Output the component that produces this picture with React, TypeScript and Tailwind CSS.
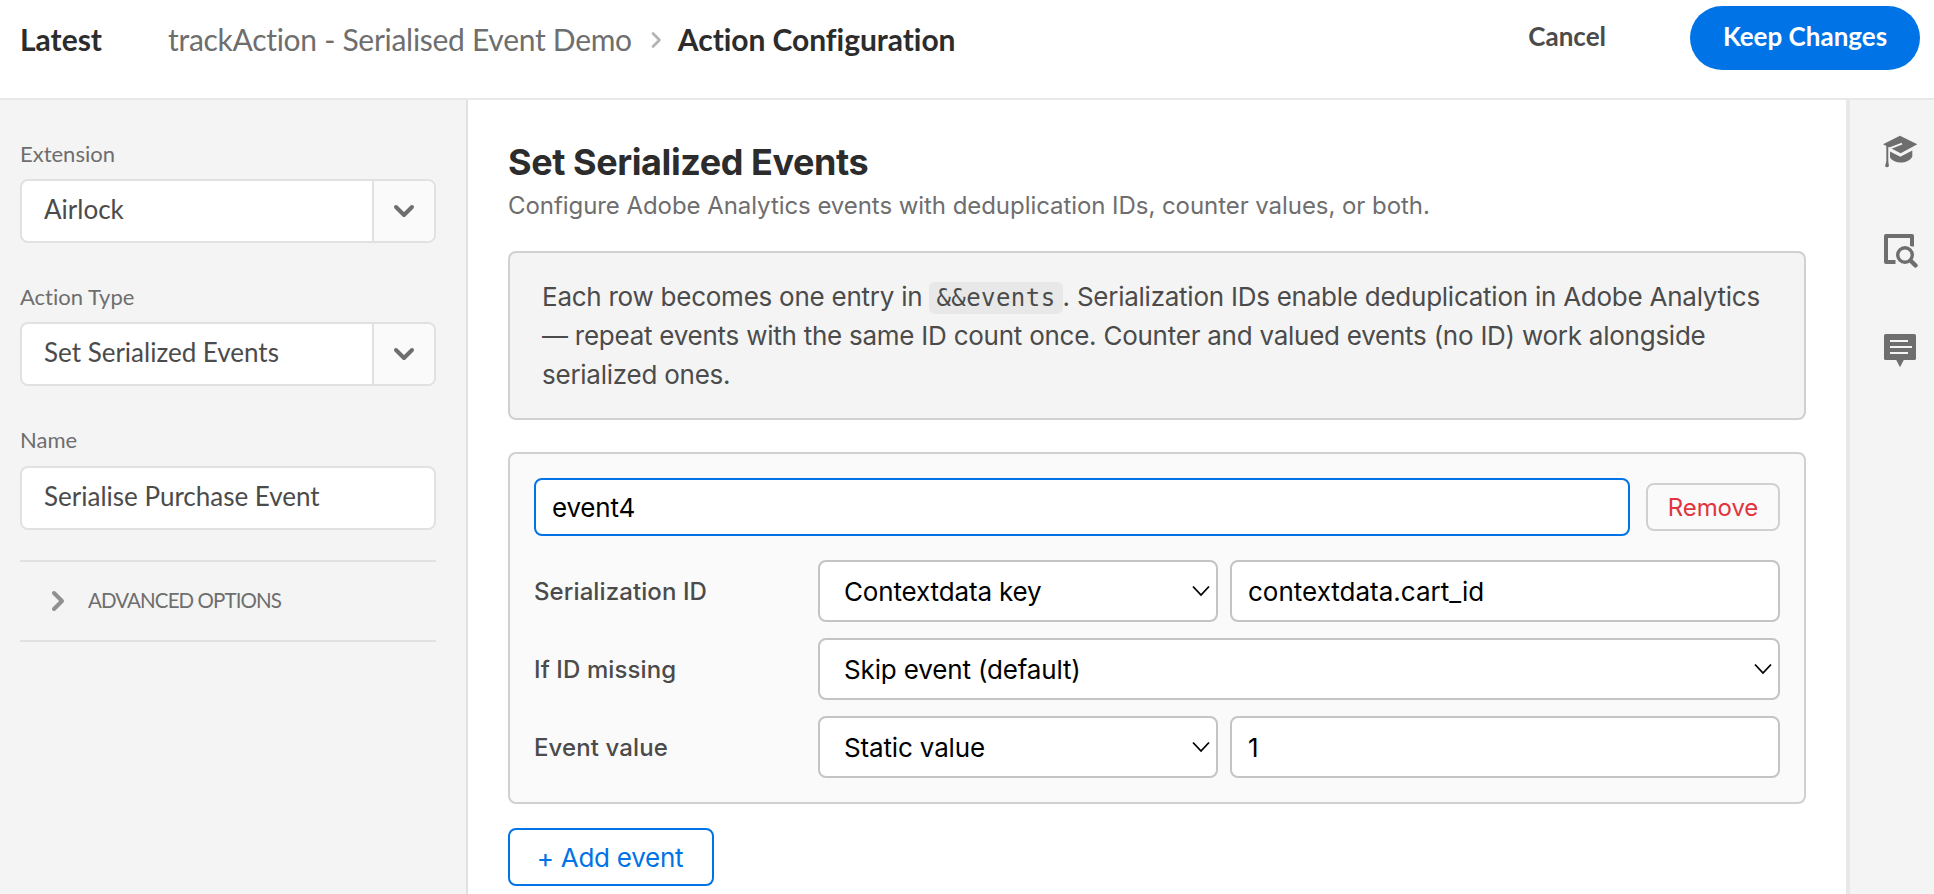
import React from 'react';

const ChevronDown = () => (
  <svg className="h-[14px] w-[22px]" viewBox="0 0 22 14" fill="none" stroke="#6e6e6e" strokeWidth="4" strokeLinecap="round" strokeLinejoin="round">
    <path d="M3 3 L11 11 L19 3" />
  </svg>
);

const SelectArrow = () => (
  <svg className="h-3 w-[18px]" viewBox="0 0 18 12" fill="none" stroke="#000" strokeWidth="1.8">
    <path d="M1 1.5 L9 10 L17 1.5" />
  </svg>
);

const LearnIcon = () => (
  <svg className="h-9 w-9" viewBox="0 0 36 36">
    <path d="M1 11.3 L18 2.7 L35.3 11.3 L18.7 20.2 Z" fill="#6e6e6e" />
    <path d="M20 10.6 L6.5 15.8 L8.5 17.5" fill="none" stroke="#f4f4f4" strokeWidth="1.8" />
    <path d="M8 18.6 L18.3 23.8 L30.3 17.6 V23.4 C26.5 31 12.5 31.5 8 24.4 Z" fill="#6e6e6e" />
    <path d="M5.3 12.5 V32" stroke="#6e6e6e" strokeWidth="2" />
    <path d="M4.4 28.5 H6 L7 33 Q5 35.6 3 33 Z" fill="#6e6e6e" />
  </svg>
);

const InspectIcon = () => (
  <svg className="h-9 w-9" viewBox="0 0 36 36" fill="none" stroke="#6e6e6e">
    <path d="M13.5 29 H4 V3 H30 V13.5" strokeWidth="4" strokeLinejoin="round" />
    <circle cx="23" cy="22" r="10.6" fill="#f4f4f4" stroke="none" />
    <circle cx="23" cy="22" r="7.3" strokeWidth="3.4" />
    <path d="M28.5 27.5 L33.5 32.5" strokeWidth="4.4" strokeLinecap="round" />
  </svg>
);

const CommentIcon = () => (
  <svg className="h-9 w-9" viewBox="0 0 36 36">
    <rect x="2" y="1" width="32" height="26" rx="1.6" fill="#6e6e6e" />
    <path d="M14 26.5 H22 L18 34.2 Z" fill="#6e6e6e" />
    <path d="M8 8 H26 M8 14 H30 M8 20 H26" stroke="#f4f4f4" strokeWidth="2" />
  </svg>
);

const FieldLabel = ({ children }: { children: React.ReactNode }) => (
  <div className="mb-[9px] text-[22px] leading-8 text-[#6e6e6e]">{children}</div>
);

const Picker = ({ label, value }: { label: string; value: string }) => (
  <div>
    <FieldLabel>{label}</FieldLabel>
    <div className="flex h-16 overflow-hidden rounded-lg border-2 border-[#e1e1e1] bg-white">
      <div className="flex flex-1 items-center pb-[3px] pl-[22px] text-[26px] text-[#4b4b4b]">{value}</div>
      <div className="flex w-[62px] items-center justify-center border-l-2 border-[#e1e1e1] bg-[#fafafa]">
        <ChevronDown />
      </div>
    </div>
  </div>
);

const Select = ({ value, className }: { value: string; className: string }) => (
  <div className={`flex h-[62px] items-center justify-between rounded-lg border-2 border-[#c4c4c4] bg-white pl-6 pr-1.5 tracking-[-0.15px] ${className}`}>
    <span className="pt-px">{value}</span>
    <SelectArrow />
  </div>
);

const TextInput = ({ value }: { value: string }) => (
  <div className="flex h-[62px] flex-1 items-center rounded-lg border-2 border-[#c4c4c4] bg-white px-4 pt-px">{value}</div>
);

const EventRow = ({ label, children }: { label: string; children: React.ReactNode }) => (
  <div className="flex items-center text-[26px] text-black">
    <div className="w-[284px] pt-0.5 text-2xl font-medium tracking-[0.1px] text-[#4b4b4b]">{label}</div>
    <div className="flex flex-1 gap-3">{children}</div>
  </div>
);

export default function App() {
  return (
    <div className="flex h-[894px] w-[1934px] flex-col overflow-hidden bg-white font-['Lato',sans-serif] [font-variant-ligatures:none]">
      <header className="flex h-[100px] shrink-0 items-center border-b-2 border-[#e8e8e8] pb-5 pl-5 pr-[14px]">
        <div className="w-[148px] text-[30px] font-bold text-[#2c2c2c]">Latest</div>
        <nav className="flex flex-1 items-center whitespace-nowrap text-[30px]">
          <span className="tracking-[-0.28px] text-[#6e6e6e]">trackAction - Serialised Event Demo</span>
          <svg className="ml-[18px] mr-4 mt-0.5 h-[18px] w-3" viewBox="0 0 12 18" fill="none" stroke="#b3b3b3" strokeWidth="2.6" strokeLinecap="round" strokeLinejoin="round">
            <path d="M3 2.5 L9.5 9 L3 15.5" />
          </svg>
          <span className="font-bold tracking-[-0.05px] text-[#2c2c2c]">Action Configuration</span>
        </nav>
        <div className="mb-0.5 flex items-center text-[26px] font-bold">
          <button className="mr-[84px] pb-1 text-[#4b4b4b]">Cancel</button>
          <button className="h-16 w-[230px] rounded-full bg-[#0073e6] pb-1 text-white">Keep Changes</button>
        </div>
      </header>

      <div className="flex min-h-0 flex-1">
        <aside className="w-[468px] shrink-0 border-r-2 border-[#e1e1e1] bg-[#f4f4f4] pl-5 pr-[30px] pt-[38px]">
          <div className="flex flex-col gap-[38px]">
            <Picker label="Extension" value="Airlock" />
            <Picker label="Action Type" value="Set Serialized Events" />
            <div>
              <FieldLabel>Name</FieldLabel>
              <div className="mt-2.5 flex h-16 items-center rounded-lg border-2 border-[#e1e1e1] bg-white pb-[3px] pl-[22px] text-[26px] text-[#4b4b4b]">
                Serialise Purchase Event
              </div>
            </div>
          </div>
          <div className="mt-[30px] flex h-[82px] items-center border-y-2 border-[#e1e1e1] pl-[30px] text-[20.5px] tracking-[-0.9px] text-[#6e6e6e]">
            <svg className="mr-[22px] h-[22px] w-4" viewBox="0 0 16 22" fill="none" stroke="#909090" strokeWidth="4" strokeLinecap="round" strokeLinejoin="round">
              <path d="M4 3 L12 11 L4 19" />
            </svg>
            <span className="pb-0.5">ADVANCED OPTIONS</span>
          </div>
        </aside>

        <main className="flex-1 bg-white pl-10 pr-10 pt-10 font-['Inter',sans-serif]">
          <h1 className="text-4xl font-bold leading-[44px] tracking-[-0.42px] text-[#2c2c2c]">Set Serialized Events</h1>
          <p className="mt-1 text-2xl leading-9 tracking-[-0.06px] text-[#6e6e6e]">
            Configure Adobe Analytics events with deduplication IDs, counter values, or both.
          </p>

          <div className="mt-[27px] rounded-lg border-2 border-[#d0d0d0] bg-[#f4f4f4] px-8 py-6 text-[26px] leading-[39px] tracking-[-0.25px] text-[#4b4b4b]">
            Each row becomes one entry in{' '}
            <code className="rounded-md bg-[#e8e8e8] px-[7px] py-[2px] font-['DejaVu_Sans_Mono',monospace] text-2xl leading-none tracking-[0.45px]">&amp;&amp;events</code>
            . Serialization IDs enable deduplication in Adobe Analytics — repeat events with the same ID count once. Counter and valued events (no ID) work alongside serialized ones.
          </div>

          <div className="mt-8 flex flex-col gap-4 rounded-lg border-2 border-[#d0d0d0] bg-[#fafafa] p-6">
            <div className="mb-2 flex items-center gap-4">
              <div className="flex h-[58px] flex-1 items-center rounded-lg border-2 border-[#0073e6] bg-white px-4 pt-px text-[26px] tracking-[-0.2px] text-black">event4</div>
              <button className="h-12 w-[134px] rounded-lg border-2 border-[#d0d0d0] bg-[#fafafa] pt-0.5 text-2xl tracking-[-0.1px] text-[#e0353f]">Remove</button>
            </div>
            <EventRow label="Serialization ID">
              <Select value="Contextdata key" className="w-[400px]" />
              <TextInput value="contextdata.cart_id" />
            </EventRow>
            <EventRow label="If ID missing">
              <Select value="Skip event (default)" className="flex-1" />
            </EventRow>
            <EventRow label="Event value">
              <Select value="Static value" className="w-[400px]" />
              <TextInput value="1" />
            </EventRow>
          </div>

          <button className="mt-6 h-[58px] w-[206px] rounded-lg border-2 border-[#0073e6] bg-white pr-0.5 text-[26px] tracking-[-0.25px] text-[#0073e6]">+ Add event</button>
        </main>

        <aside className="flex w-[88px] shrink-0 flex-col gap-16 border-l-4 border-[#e8e8e8] bg-[#f4f4f4] pl-8 pt-[33px]">
          <LearnIcon />
          <InspectIcon />
          <CommentIcon />
        </aside>
      </div>
    </div>
  );
}
